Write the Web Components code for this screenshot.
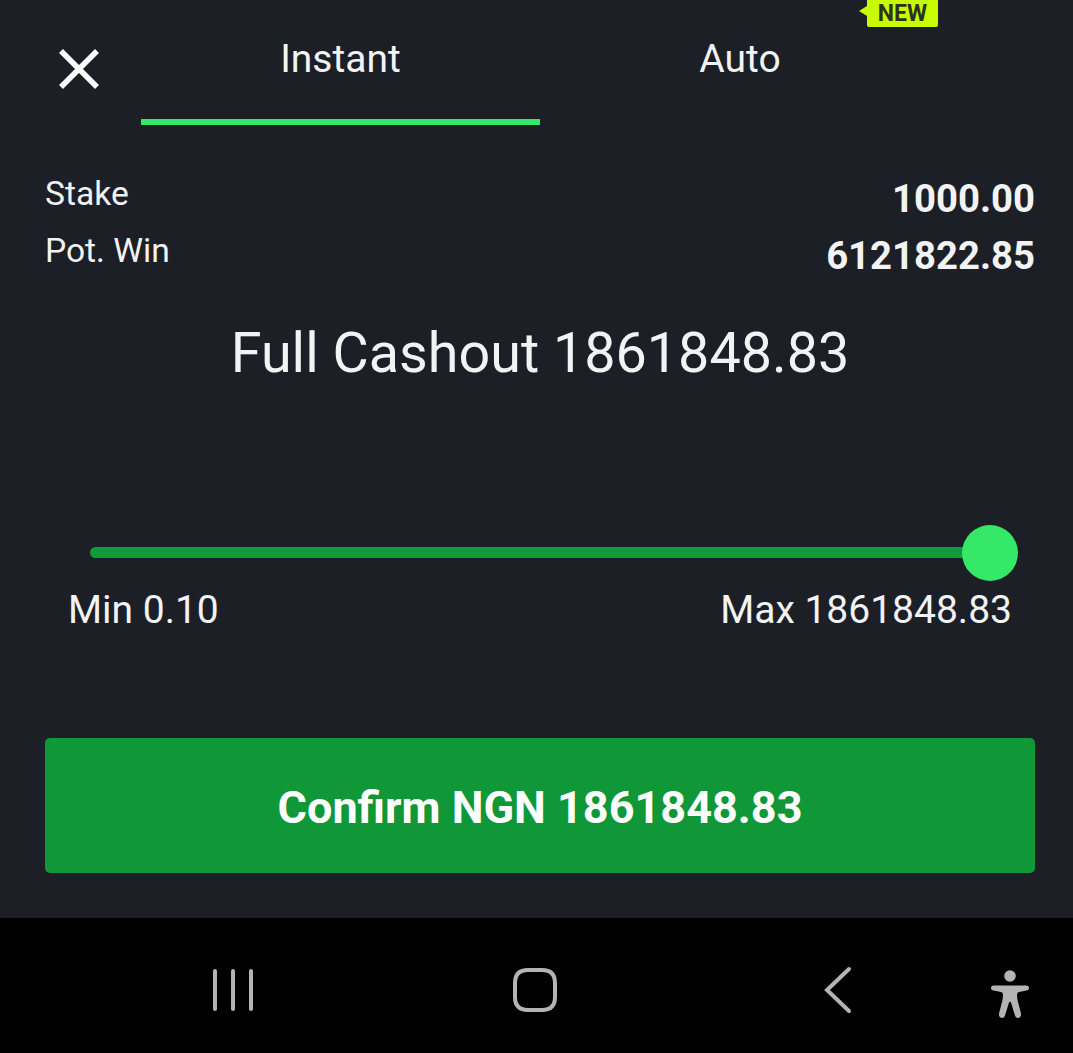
<!DOCTYPE html>
<html>
<head>
<meta charset="utf-8">
<style>
  html, body { margin: 0; height: 100%; background: #1c1f26; }
  body { font-family: Roboto, "Liberation Sans", sans-serif; color: #f2f3f5; width: 1073px; height: 1053px; overflow: hidden; display: flex; flex-direction: column; }
</style>
</head>
<body>
<cashout-sheet>
  <cashout-header></cashout-header>
  <cashout-row label="Stake" value="1000.00"></cashout-row>
  <cashout-row label="Pot. Win" value="6121822.85"></cashout-row>
  <cashout-slider min="Min 0.10" max="Max 1861848.83"></cashout-slider>
  <confirm-button>Confirm NGN 1861848.83</confirm-button>
</cashout-sheet>
<nav-bar></nav-bar>
<script>
// Top tabs with the close icon and the NEW flag
class CashoutHeader extends HTMLElement {
  constructor() {
    super();
    this.attachShadow({ mode: "open" });
    this.shadowRoot.innerHTML = `
      <style>
        :host { display: flex; height: 125px; margin-bottom: 46px; }
        .close { width: 141px; display: flex; justify-content: center; padding: 46px 0 0 17px; box-sizing: border-box; }
        .tab { width: 400px; height: 125px; box-sizing: border-box; padding-top: 36px; text-align: center; font-size: 39px; line-height: 46px; position: relative; }
        .active { width: 399px; border-bottom: 6px solid #36e868; }
        .new { position: absolute; left: 327px; top: 0; width: 71px; height: 27px; background: #c9fb00; color: #2b3320; font-size: 23px; font-weight: 700; line-height: 27px; text-align: center; border-radius: 0 0 2px 2px; }
        .new::before { content: ""; position: absolute; left: -8px; top: 6px; border: 5px solid transparent; border-left: 0; border-right: 8px solid #c9fb00; }
      </style>
      <div class="close">
        <svg width="46" height="46" viewBox="0 0 46 46"><path d="M5 5 L41 41 M41 5 L5 41" stroke="#fff" stroke-width="5.5" fill="none"/></svg>
      </div>
      <div class="tab active">Instant</div>
      <div class="tab">Auto<span class="new">NEW</span></div>`;
  }
}

// One label and amount line
class CashoutRow extends HTMLElement {
  constructor() {
    super();
    this.attachShadow({ mode: "open" });
    this.shadowRoot.innerHTML = `
      <style>
        :host { display: flex; justify-content: space-between; height: 57px; padding: 0 38px 0 45px; }
        .label { font-size: 33.6px; line-height: 46px; }
        .value { font-size: 38.3px; font-weight: 700; line-height: 46px; margin-top: 5px; }
      </style>
      <span class="label">${this.getAttribute("label")}</span>
      <span class="value">${this.getAttribute("value")}</span>`;
  }
}

// Heading, track, thumb and the min and max labels
class CashoutSlider extends HTMLElement {
  constructor() {
    super();
    this.attachShadow({ mode: "open" });
    this.shadowRoot.innerHTML = `
      <style>
        :host { display: block; }
        h2 { margin: 0; padding: 36px 0 0 7px; height: 70px; font-size: 55.7px; font-weight: 400; line-height: 64px; text-align: center; }
        .track { position: relative; margin: 156px 65px 0 90px; height: 11px; background: #109a39; border-radius: 6px; }
        .thumb { position: absolute; right: -10px; top: -22px; width: 56px; height: 56px; border-radius: 50%; background: #36e868; }
        .ends { display: flex; justify-content: space-between; padding: 0 61px 0 68px; margin-top: 29px; font-size: 39px; line-height: 46px; }
      </style>
      <h2>Full Cashout 1861848.83</h2>
      <div class="track"><div class="thumb"></div></div>
      <div class="ends"><span>${this.getAttribute("min")}</span><span>${this.getAttribute("max")}</span></div>`;
  }
}

class ConfirmButton extends HTMLElement {
  constructor() {
    super();
    this.attachShadow({ mode: "open" });
    this.shadowRoot.innerHTML = `
      <style>
        :host { display: flex; align-items: center; justify-content: center; box-sizing: border-box; height: 135px; padding-top: 4px; margin: 105px 38px 0 45px; background: #0f9738; border-radius: 5px; color: #fff; font-size: 45px; font-weight: 700; }
      </style>
      <slot></slot>`;
  }
}

class CashoutSheet extends HTMLElement {
  constructor() {
    super();
    this.attachShadow({ mode: "open" });
    this.shadowRoot.innerHTML = `
      <style>
        :host { display: block; height: 918px; background: #1c1f26; }
      </style>
      <slot></slot>`;
  }
}

// Android navigation bar
class NavBar extends HTMLElement {
  constructor() {
    super();
    this.attachShadow({ mode: "open" });
    this.shadowRoot.innerHTML = `
      <style>
        :host { display: block; height: 135px; background: #000; }
        svg { display: block; }
      </style>
      <svg width="1073" height="135" viewBox="0 0 1073 135" fill="none" stroke="#b4b4b4" stroke-linecap="round">
        <path d="M215 53 V91 M233 53 V91 M251 53 V91" stroke-width="4"/>
        <path d="M528 52 H542 C550.5 52 555 56.5 555 65 V79 C555 87.5 550.5 92 542 92 H528 C519.5 92 515 87.5 515 79 V65 C515 56.5 519.5 52 528 52 Z" stroke-width="4"/>
        <path d="M849 51 L827 72 L849 93" stroke-width="4"/>
        <g fill="#b4b4b4" stroke="none">
          <circle cx="1010" cy="58" r="5.8"/>
          <path d="M991 70 C991 68.5 992 67.5 993.5 67.5 H1026.5 C1028 67.5 1029 68.5 1029 70 C1029 71.5 1028 72.3 1026.5 72.5 L1019 74 C1017.5 74.4 1017 75.5 1017 77 L1017.5 82 L1021 95.5 C1021.5 98 1019.8 100 1018 100 C1016.5 100 1015.4 99 1015 97.5 L1011 84.5 C1010.7 83.6 1009.3 83.6 1009 84.5 L1005 97.5 C1004.6 99 1003.5 100 1002 100 C1000.2 100 998.5 98 999 95.5 L1002.5 82 L1003 77 C1003 75.5 1002.5 74.4 1001 74 L993.5 72.5 C992 72.3 991 71.5 991 70 Z"/>
        </g>
      </svg>`;
  }
}

customElements.define("cashout-header", CashoutHeader);
customElements.define("cashout-row", CashoutRow);
customElements.define("cashout-slider", CashoutSlider);
customElements.define("confirm-button", ConfirmButton);
customElements.define("cashout-sheet", CashoutSheet);
customElements.define("nav-bar", NavBar);
</script>
</body>
</html>
